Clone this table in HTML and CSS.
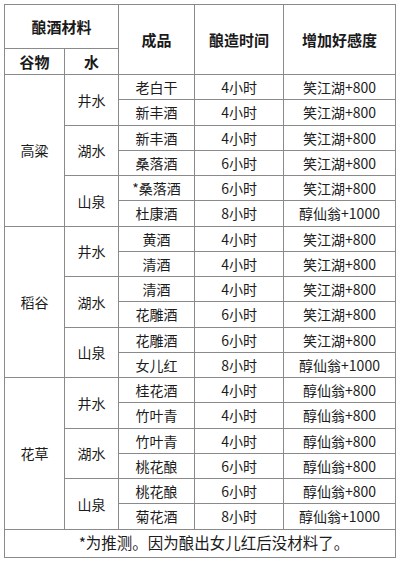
FILE: index.html
```html
<!DOCTYPE html>
<html lang="zh-CN">
<head>
<meta charset="utf-8">
<title>酿酒材料</title>
<link rel="stylesheet" href="styles.css">
</head>
<body>
<table class="brew">
  <colgroup>
    <col class="c-grain">
    <col class="c-water">
    <col class="c-product">
    <col class="c-time">
    <col class="c-gain">
  </colgroup>
  <thead>
    <tr class="h1">
      <th colspan="2">酿酒材料</th>
      <th rowspan="2">成品</th>
      <th rowspan="2">酿造时间</th>
      <th rowspan="2">增加好感度</th>
    </tr>
    <tr class="h2">
      <th>谷物</th>
      <th>水</th>
    </tr>
  </thead>
  <tbody>
    <tr><td rowspan="6">高粱</td><td rowspan="2">井水</td><td>老白干</td><td>4小时</td><td>笑江湖+800</td></tr>
    <tr><td>新丰酒</td><td>4小时</td><td>笑江湖+800</td></tr>
    <tr><td rowspan="2">湖水</td><td>新丰酒</td><td>4小时</td><td>笑江湖+800</td></tr>
    <tr><td>桑落酒</td><td>6小时</td><td>笑江湖+800</td></tr>
    <tr><td rowspan="2">山泉</td><td>*桑落酒</td><td>6小时</td><td>笑江湖+800</td></tr>
    <tr><td>杜康酒</td><td>8小时</td><td>醇仙翁+1000</td></tr>

    <tr><td rowspan="6">稻谷</td><td rowspan="2">井水</td><td>黄酒</td><td>4小时</td><td>笑江湖+800</td></tr>
    <tr><td>清酒</td><td>4小时</td><td>笑江湖+800</td></tr>
    <tr><td rowspan="2">湖水</td><td>清酒</td><td>4小时</td><td>笑江湖+800</td></tr>
    <tr><td>花雕酒</td><td>6小时</td><td>笑江湖+800</td></tr>
    <tr><td rowspan="2">山泉</td><td>花雕酒</td><td>6小时</td><td>笑江湖+800</td></tr>
    <tr><td>女儿红</td><td>8小时</td><td>醇仙翁+1000</td></tr>

    <tr><td rowspan="6">花草</td><td rowspan="2">井水</td><td>桂花酒</td><td>4小时</td><td>醇仙翁+800</td></tr>
    <tr><td>竹叶青</td><td>4小时</td><td>醇仙翁+800</td></tr>
    <tr><td rowspan="2">湖水</td><td>竹叶青</td><td>4小时</td><td>醇仙翁+800</td></tr>
    <tr><td>桃花酿</td><td>6小时</td><td>醇仙翁+800</td></tr>
    <tr><td rowspan="2">山泉</td><td>桃花酿</td><td>6小时</td><td>醇仙翁+800</td></tr>
    <tr><td>菊花酒</td><td>8小时</td><td>醇仙翁+1000</td></tr>
  </tbody>
  <tfoot>
    <tr class="note"><td colspan="5">*为推测。因为酿出女儿红后没材料了。</td></tr>
  </tfoot>
</table>
</body>
</html>
```

FILE: styles.css
```css
html, body {
  margin: 0;
  padding: 0;
  background: #ffffff;
}

body {
  padding: 4px 0 0 4px;
  font-family: "Noto Sans CJK SC", "Noto Sans", sans-serif;
  color: #1c1c1c;
}

.brew {
  border-collapse: collapse;
  table-layout: fixed;
  width: 391px;
}

.brew th,
.brew td {
  border: 1px solid #8a8a8a;
  padding: 0;
  text-align: center;
  vertical-align: middle;
  line-height: 1;
}

.c-grain { width: 60px; }
.c-water { width: 54px; }
.c-product { width: 76px; }
.c-time { width: 89px; }
.c-gain { width: 112px; }

.brew th {
  font-size: 15px;
  font-weight: 700;
  color: #1a1a1a;
}

.h1 { height: 44px; }
.h2 { height: 26px; }

.brew tbody td {
  font-size: 14px;
  height: 24.25px;
}

.brew tbody tr { height: 25.25px; }

.note td {
  height: 27px;
  font-size: 15.5px;
  padding-left: 28px;
}
```
